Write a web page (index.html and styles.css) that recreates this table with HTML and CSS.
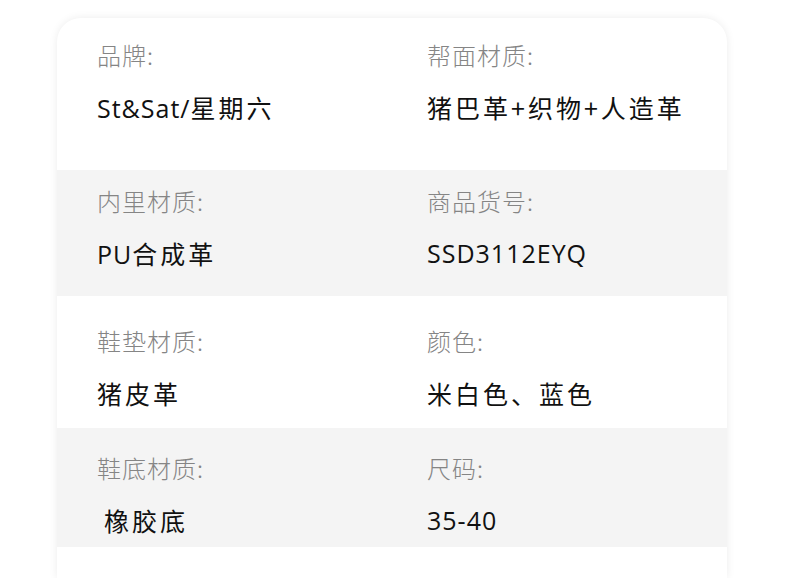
FILE: index.html
```html
<!DOCTYPE html>
<html lang="zh">
<head>
<meta charset="utf-8">
<title>商品参数</title>
<link rel="stylesheet" href="styles.css">
</head>
<body>
<div class="card">
  <div class="row r1">
    <div class="cell"><div class="label">品牌:</div><div class="value">St&amp;Sat/<span class="cjk">星期六</span></div></div>
    <div class="cell"><div class="label">帮面材质:</div><div class="value"><span class="cjk">猪巴革+织物+人造革</span></div></div>
  </div>
  <div class="row r2 gray">
    <div class="cell"><div class="label">内里材质:</div><div class="value">PU<span class="cjk">合成革</span></div></div>
    <div class="cell"><div class="label">商品货号:</div><div class="value">SSD3112EYQ</div></div>
  </div>
  <div class="row r3">
    <div class="cell"><div class="label">鞋垫材质:</div><div class="value"><span class="cjk">猪皮革</span></div></div>
    <div class="cell"><div class="label">颜色:</div><div class="value"><span class="cjk">米白色、蓝色</span></div></div>
  </div>
  <div class="row r4 gray">
    <div class="cell"><div class="label">鞋底材质:</div><div class="value indent"><span class="cjk">橡胶底</span></div></div>
    <div class="cell"><div class="label">尺码:</div><div class="value">35-40</div></div>
  </div>
  <div class="row r5"></div>
</div>
</body>
</html>
```

FILE: styles.css
```css
html, body {
  margin: 0;
  padding: 0;
  background: #ffffff;
}
body {
  padding: 18px 0 0 57px;
  font-family: "Open Sans", "Noto Sans CJK SC", sans-serif;
  overflow: hidden;
  height: 578px;
  box-sizing: border-box;
}
.card {
  width: 670px;
  background: #ffffff;
  border-radius: 24px 24px 0 0;
  box-shadow: 0 0 9px rgba(0, 0, 0, 0.08);
  overflow: hidden;
}
.row {
  display: grid;
  grid-template-columns: 330px 1fr;
  box-sizing: border-box;
}
.gray {
  background: #f4f4f4;
}
.cell {
  padding-left: 40px;
}
.label {
  font-family: "Noto Sans CJK SC", sans-serif;
  font-weight: 300;
  font-size: 24px;
  line-height: 30px;
  letter-spacing: 1px;
  color: #858585;
}
.value {
  margin-top: 22px;
  font-size: 25px;
  line-height: 30px;
  color: #111111;
  letter-spacing: 1px;
}
.cjk {
  font-family: "Noto Sans CJK SC", sans-serif;
  letter-spacing: 3px;
}
.indent {
  padding-left: 7px;
}
.r1 { height: 152px; padding-top: 22px; }
.r2 { height: 126px; padding-top: 16px; }
.r3 { height: 132px; padding-top: 30px; }
.r4 { height: 119px; padding-top: 25px; }
.r5 { height: 31px; }
```
